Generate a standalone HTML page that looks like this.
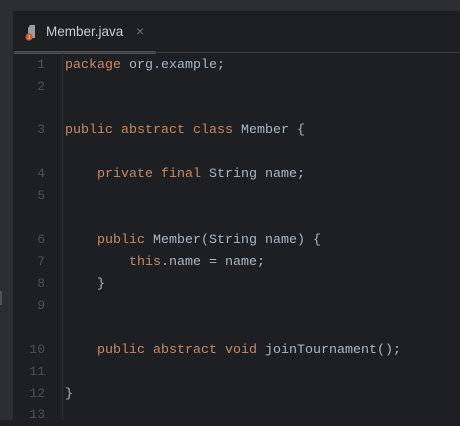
<!DOCTYPE html>
<html><head><style>
body{margin:0;width:460px;height:420px;background:#1e1f22;overflow:hidden;position:relative;font-family:"Liberation Mono",monospace;}
.top{position:absolute;left:0;top:0;width:460px;height:11px;background:#2b2d30;}
.left{position:absolute;left:0;top:11px;width:13px;height:409px;background:#2b2d30;}
.sep{position:absolute;left:13px;top:52px;width:447px;height:1px;background:#393b40;}
.ul{position:absolute;left:14px;top:51px;width:142px;height:3px;background:#4e5157;border-radius:1px;}
.gl{position:absolute;left:62px;top:53px;width:1px;height:367px;background:#2b2d30;}
.tab{position:absolute;left:46px;top:24px;font:13.5px "Liberation Sans",sans-serif;color:#c9ccd1;}
.x{position:absolute;left:136px;top:23px;font:14px "Liberation Sans",sans-serif;color:#6f737a;}
.mark{position:absolute;left:0;top:291px;width:2px;height:14px;background:#4e5157;}
.ln{position:absolute;width:33px;left:12px;text-align:right;color:#4b5059;font-size:13px;line-height:22px;}
.c{position:absolute;left:65px;color:#a9b7c6;font-size:13.33px;line-height:22px;white-space:pre;padding-top:1px;}
.k{color:#c88a62}
</style></head><body>
<div class="top"></div><div class="left"></div><div class="mark"></div>
<svg style="position:absolute;left:25px;top:25px" width="14" height="16" viewBox="0 0 14 16"><path d="M5 0h5v13H3V3z" fill="#9a9ca1"/><circle cx="4" cy="12" r="3.6" fill="#c65a28"/><text x="2.5" y="14" font-size="5" fill="#fff" font-family="Liberation Sans">J</text></svg>
<div class="tab">Member.java</div><div class="x">×</div>
<div class="ul"></div><div class="sep"></div><div class="gl"></div>
<div class="ln" style="top:54px">1</div><div class="c" style="top:54px"><span class="k">package</span> org.example;</div>
<div class="ln" style="top:76px">2</div>
<div class="ln" style="top:119px">3</div><div class="c" style="top:119px"><span class="k">public abstract class</span> Member {</div>
<div class="ln" style="top:163px">4</div><div class="c" style="top:163px">    <span class="k">private final</span> String name;</div>
<div class="ln" style="top:185px">5</div>
<div class="ln" style="top:229px">6</div><div class="c" style="top:229px">    <span class="k">public</span> Member(String name) {</div>
<div class="ln" style="top:251px">7</div><div class="c" style="top:251px">        <span class="k">this</span>.name = name;</div>
<div class="ln" style="top:273px">8</div><div class="c" style="top:273px">    }</div>
<div class="ln" style="top:295px">9</div>
<div class="ln" style="top:339px">10</div><div class="c" style="top:339px">    <span class="k">public abstract void</span> joinTournament();</div>
<div class="ln" style="top:361px">11</div>
<div class="ln" style="top:383px">12</div><div class="c" style="top:383px">}</div>
<div class="ln" style="top:404px">13</div>
</body></html>
